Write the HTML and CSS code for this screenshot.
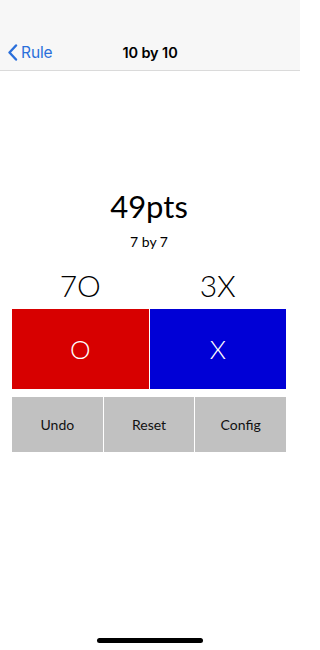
FILE: index.html
```html
<!DOCTYPE html>
<html lang="en">
<head>
<meta charset="utf-8">
<title>10 by 10</title>
<link rel="stylesheet" href="styles.css">
</head>
<body>
<div class="screen">
  <header class="bar">
    <div class="status"></div>
    <nav class="navbar">
      <a class="back" href="#">
        <svg class="chev" width="11" height="17" viewBox="0 0 11 17"><path d="M9 1.5 L2.5 8.5 L9 15.5" fill="none" stroke="#2a6fdb" stroke-width="2.4" stroke-linecap="round" stroke-linejoin="round"/></svg>
        <span>Rule</span>
      </a>
      <div class="title">10 by 10</div>
      <div></div>
    </nav>
  </header>
  <main class="game">
    <div class="score">49pts</div>
    <div class="size">7 by 7</div>
    <div class="labels">
      <div class="label">7O</div>
      <div class="label">3X</div>
    </div>
    <div class="players">
      <div class="player red">O</div>
      <div class="player blue">X</div>
    </div>
    <div class="actions">
      <div class="btn">Undo</div>
      <div class="btn">Reset</div>
      <div class="btn">Config</div>
    </div>
  </main>
  <div class="home"></div>
</div>
</body>
</html>
```
FILE: styles.css
```css
html, body {
  margin: 0;
  padding: 0;
  background: #ffffff;
  overflow: hidden;
}
.screen {
  width: 300px;
  height: 650px;
  box-sizing: border-box;
  display: flex;
  flex-direction: column;
  font-family: "Lato", "DejaVu Sans", sans-serif;
  color: #000;
  overflow: hidden;
}
.bar {
  background: #f7f7f7;
  border-bottom: 1px solid #dadada;
}
.status {
  height: 35px;
}
.navbar {
  height: 35px;
  display: grid;
  grid-template-columns: 1fr auto 1fr;
  align-items: center;
  font-family: "Inter", "Liberation Sans", sans-serif;
}
.back {
  display: flex;
  align-items: center;
  gap: 3px;
  padding-left: 7px;
  color: #2a6fdb;
  text-decoration: none;
  font-size: 15.5px;
  letter-spacing: -0.1px;
}
.chev {
  display: block;
}
.title {
  font-size: 14.5px;
  font-weight: 600;
  letter-spacing: -0.1px;
}
.game {
  padding: 0 14px 0 12px;
  display: flex;
  flex-direction: column;
  align-items: stretch;
}
.score {
  margin-top: 117px;
  text-align: center;
  font-size: 31px;
  line-height: 36px;
  font-weight: 400;
}
.size {
  margin-top: 9px;
  text-align: center;
  font-size: 14px;
  line-height: 17px;
}
.labels {
  margin-top: 17px;
  display: grid;
  grid-template-columns: 1fr 1fr;
  gap: 1px;
}
.label {
  text-align: center;
  font-size: 30px;
  line-height: 36px;
  font-weight: 300;
}
.players {
  margin-top: 6px;
  display: grid;
  grid-template-columns: 1fr 1fr;
  gap: 1px;
  height: 80px;
}
.player {
  display: flex;
  align-items: center;
  justify-content: center;
  color: #ffffff;
  font-size: 26px;
  font-weight: 300;
}
.red {
  background: #d70000;
}
.blue {
  background: #0000d6;
}
.actions {
  margin-top: 8px;
  display: grid;
  grid-template-columns: 1fr 1fr 1fr;
  gap: 1px;
  height: 55px;
}
.btn {
  background: #c1c1c1;
  display: flex;
  align-items: center;
  justify-content: center;
  font-size: 14px;
  color: #111;
}
.home {
  margin-top: auto;
  margin-bottom: 7px;
  align-self: center;
  width: 106px;
  height: 5px;
  border-radius: 3px;
  background: #000;
}
```
